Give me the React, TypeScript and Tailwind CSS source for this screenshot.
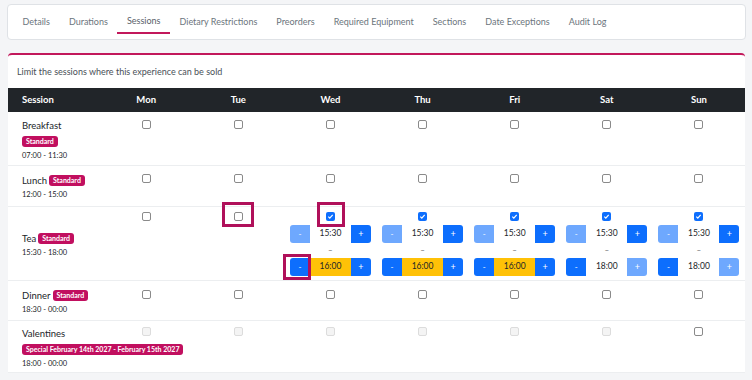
import React from 'react';

const days = ['Mon', 'Tue', 'Wed', 'Thu', 'Fri', 'Sat', 'Sun'];
const tabs = ['Details', 'Durations', 'Sessions', 'Dietary Restrictions', 'Preorders', 'Required Equipment', 'Sections', 'Date Exceptions', 'Audit Log'];

function Box({ checked = false, disabled = false }: { checked?: boolean; disabled?: boolean }) {
  if (checked) {
    return (
      <span className="flex w-[9px] h-[9px] rounded-[2px] bg-[#0d6efd] items-center justify-center">
        <svg width="7" height="7" viewBox="0 0 8 8">
          <path d="M1.5 4.2 L3.2 5.8 L6.5 2.2" stroke="white" strokeWidth="1.4" fill="none" />
        </svg>
      </span>
    );
  }
  return (
    <span
      className={
        'block w-[9px] h-[9px] rounded-[2px] border ' +
        (disabled ? 'border-[#dcdcdc] bg-[#f4f4f4]' : 'border-[#8a8a8a] bg-white')
      }
    />
  );
}

function Badge({ children }: { children: React.ReactNode }) {
  return (
    <span className="inline-block bg-[#c10f5f] text-white font-bold text-[7px] leading-[11px] px-[4px] rounded-[3px] whitespace-nowrap">
      {children}
    </span>
  );
}

function Stepper({ value, minusOn, plusOn, yellow }: { value: string; minusOn: boolean; plusOn: boolean; yellow?: boolean }) {
  return (
    <div className="flex h-[18px] w-[81px] mx-auto">
      <span className={'w-[20px] rounded-l-[3px] text-white text-[8px] flex items-center justify-center ' + (minusOn ? 'bg-[#0d6efd]' : 'bg-[#6ea8fe]')}>-</span>
      <span className={'flex-1 flex items-center justify-center text-[8.5px] text-[#212529] ' + (yellow ? 'bg-[#ffc107]' : 'bg-white')}>{value}</span>
      <span className={'w-[20px] rounded-r-[3px] text-white text-[9px] flex items-center justify-center ' + (plusOn ? 'bg-[#0d6efd]' : 'bg-[#6ea8fe]')}>+</span>
    </div>
  );
}

function Cell({ pt, disabled }: { pt: string; disabled?: boolean }) {
  return (
    <td className={'align-top ' + pt}>
      <div className="flex justify-center"><Box disabled={disabled} /></div>
    </td>
  );
}

function TeaCell({ checked, end, yellow }: { checked: boolean; end?: string; yellow?: boolean }) {
  if (!checked) return <Cell pt="pt-[5px]" />;
  return (
    <td className="align-top pt-[5px]">
      <div className="flex justify-center"><Box checked /></div>
      <div className="mt-[4px]">
        <Stepper value="15:30" minusOn={false} plusOn />
      </div>
      <div className="h-[15px] flex items-center justify-center text-[8px] text-[#555]">–</div>
      <Stepper value={end ?? '16:00'} minusOn plusOn={!!yellow} yellow={yellow} />
    </td>
  );
}

function Session({ name, badge, time, inline }: { name: string; badge: string; time: string; inline?: boolean }) {
  return (
    <td className="align-middle pl-[14px] pt-[4px]">
      {inline ? (
        <div className="flex items-center gap-[2px] text-[9.5px] leading-[13px] text-[#212529]">
          {name} <Badge>{badge}</Badge>
        </div>
      ) : (
        <>
          <div className="text-[9.5px] leading-[13px] text-[#212529]">{name}</div>
          <div className="mt-[4px] leading-[11px] flex"><Badge>{badge}</Badge></div>
        </>
      )}
      <div className={'text-[7.5px] leading-[12px] text-[#212529] ' + (inline ? 'mt-[2px]' : 'mt-[3px]')}>{time}</div>
    </td>
  );
}

export default function App() {
  return (
    <div className="relative w-[752px] h-[380px] overflow-hidden bg-[#f4f5f7] font-['Lato',sans-serif]">
      {/* Tabs */}
      <div className="pt-[4px] pl-[7px] pr-[6px]">
        <div className="h-[36px] bg-white border border-[#dfe2e6] rounded-[4px] flex items-stretch pl-[5px]">
          {tabs.map((t) => (
            <div
              key={t}
              className={
                'px-[9.5px] flex items-center text-[9px] ' +
                (t === 'Sessions' ? 'text-[#5a6169] border-b-2 border-[#c2185b] pt-[5px] mb-[5px]' : 'text-[#6c757d] pb-[1px]')
              }
            >
              {t}
            </div>
          ))}
        </div>
      </div>

      {/* Card */}
      <div className="mt-[13px] ml-[8px] w-[737px] bg-white border-t-2 border-[#c2185b] rounded-t-[4px]">
        <div className="pl-[9px] pt-[10px] pb-[9px] text-[9px] leading-[14px] text-[#495057]">
          Limit the sessions where this experience can be sold
        </div>
        <table className="w-full table-fixed border-collapse">
          <colgroup>
            <col className="w-[92px]" />
            {days.map((d) => (
              <col key={d} className="w-[92px]" />
            ))}
          </colgroup>
          <thead>
            <tr className="h-[24px] bg-[#212529] text-white text-[9.5px] font-bold">
              <th className="text-left pl-[14px]">Session</th>
              {days.map((d) => (
                <th key={d} className="text-center">{d}</th>
              ))}
            </tr>
          </thead>
          <tbody>
            <tr className="h-[53px] border-b border-[#eceef0]">
              <Session name="Breakfast" badge="Standard" time="07:00 - 11:30" />
              {days.map((d) => <Cell key={d} pt="pt-[8px]" />)}
            </tr>
            <tr className="h-[41px] border-b border-[#eceef0]">
              <Session name="Lunch" badge="Standard" time="12:00 - 15:00" inline />
              {days.map((d) => <Cell key={d} pt="pt-[8px]" />)}
            </tr>
            <tr className="h-[74px] border-b border-[#eceef0]">
              <Session name="Tea" badge="Standard" time="15:30 - 18:00" inline />
              <TeaCell checked={false} />
              <TeaCell checked={false} />
              <TeaCell checked yellow />
              <TeaCell checked yellow />
              <TeaCell checked yellow />
              <TeaCell checked end="18:00" />
              <TeaCell checked end="18:00" />
            </tr>
            <tr className="h-[40px] border-b border-[#eceef0]">
              <Session name="Dinner" badge="Standard" time="18:30 - 00:00" inline />
              {days.map((d) => <Cell key={d} pt="pt-[9px]" />)}
            </tr>
            <tr className="h-[52px] border-b border-[#eceef0]">
              <Session name="Valentines" badge="Special February 14th 2027 - February 15th 2027" time="18:00 - 00:00" />
              {days.map((d) => <Cell key={d} pt="pt-[6px]" disabled={d !== 'Sun'} />)}
            </tr>
          </tbody>
        </table>
      </div>

      {/* Annotation highlights */}
      <div className="absolute left-[222px] top-[202px] w-[32px] h-[25px] border-[3px] border-[#b0105a]" />
      <div className="absolute left-[317px] top-[202px] w-[28px] h-[25px] border-[3px] border-[#b0105a]" />
      <div className="absolute left-[283px] top-[254px] w-[28px] h-[26px] border-[3px] border-[#b0105a]" />
    </div>
  );
}
